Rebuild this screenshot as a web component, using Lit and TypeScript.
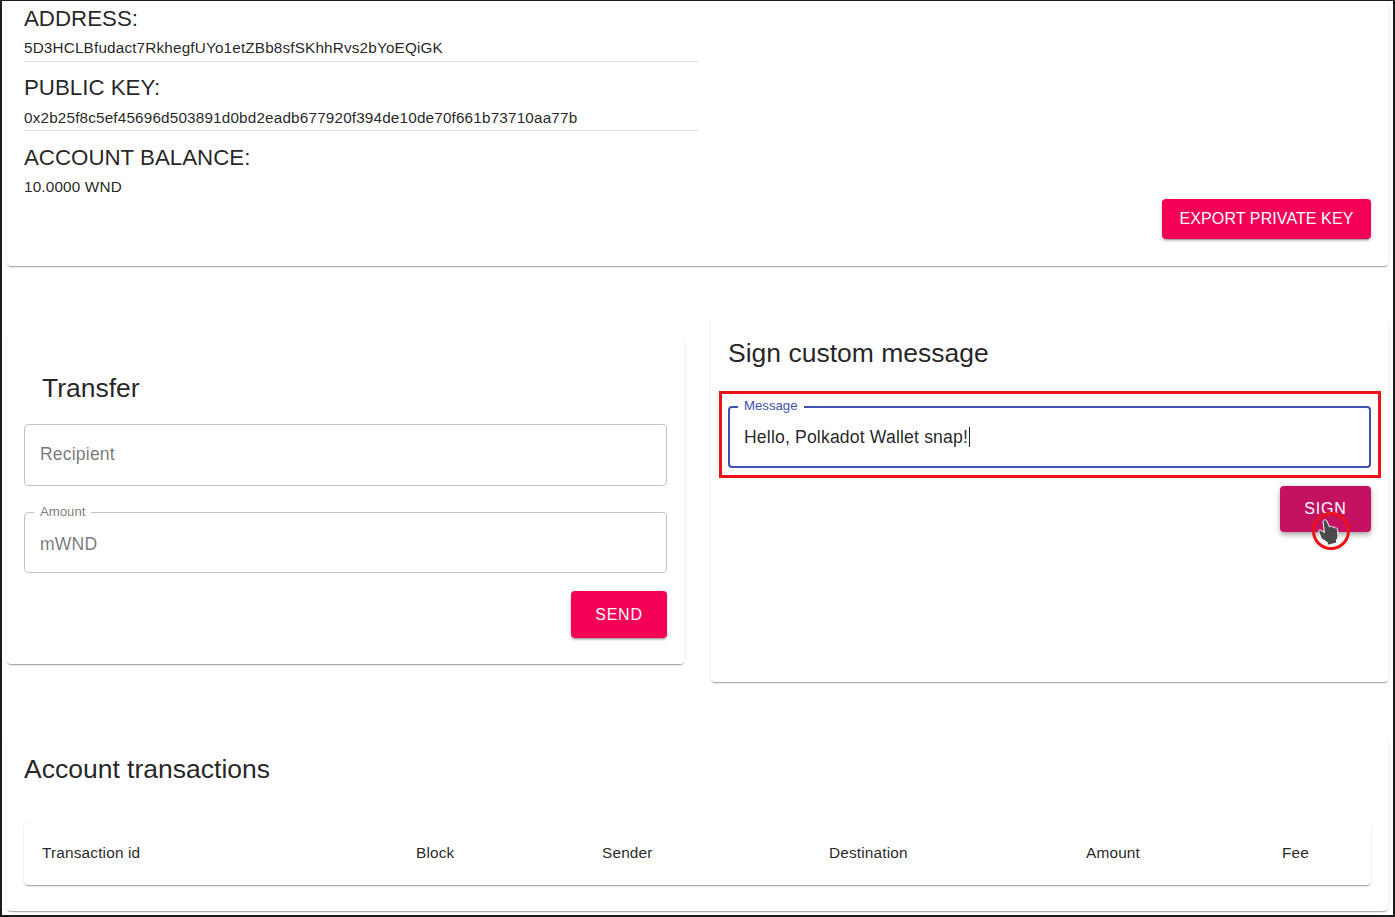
import { html, css, LitElement } from 'lit';
import { customElement } from 'lit/decorators.js';

const paperShadow = css`
  box-shadow: 0 2px 1px -1px rgba(0, 0, 0, 0.2), 0 1px 1px 0 rgba(0, 0, 0, 0.14),
    0 1px 3px 0 rgba(0, 0, 0, 0.1);
`;

@customElement('app-root')
export class AppRoot extends LitElement {
  render() {
    return html`
      <main class="frame">
        <section class="card account">
          <div class="details">
            <h2 class="label">ADDRESS:</h2>
            <p class="value ruled">5D3HCLBfudact7RkhegfUYo1etZBb8sfSKhhRvs2bYoEQiGK</p>
            <h2 class="label">PUBLIC KEY:</h2>
            <p class="value ruled key">0x2b25f8c5ef45696d503891d0bd2eadb677920f394de10de70f661b73710aa77b</p>
            <h2 class="label balance">ACCOUNT BALANCE:</h2>
            <p class="value">10.0000 WND</p>
          </div>
          <button class="btn export">Export private key</button>
        </section>

        <div class="columns">
          <section class="card transfer">
            <h3 class="title transfer-title">Transfer</h3>
            <div class="field recipient"><span class="placeholder">Recipient</span></div>
            <div class="field amount">
              <span class="legend">Amount</span>
              <span class="placeholder">mWND</span>
            </div>
            <div class="actions"><button class="btn send">Send</button></div>
          </section>

          <section class="card sign">
            <h3 class="title">Sign custom message</h3>
            <div class="field focused">
              <span class="legend">Message</span>
              <span class="typed">Hello, Polkadot Wallet snap!</span><span class="caret"></span>
              <div class="highlight"></div>
            </div>
            <div class="actions">
              <button class="btn hover sign-btn">
                Sign
                <span class="pointer">
                  <svg width="22" height="28" viewBox="0 0 22 28">
                    <path
                      d="M5 2.5c.3-2 3-2.4 3.9-.5l2.6 6 .9-.5c1-.4 1.9 0 2.3.8l.5-.2c1-.3 1.8.2 2.1 1l.5-.1c1-.1 1.6.5 1.8 1.4l.4 6.5c0 2-.8 3.2-1.6 4l.3 3-8.6 2.4-1-3-5.8-3.7L.8 13c-.6-1 .3-2.5 1.6-2l4 2.5z"
                      fill="#4b4b4b"
                      stroke="#fff"
                      stroke-width="1"
                    />
                  </svg>
                </span>
              </button>
            </div>
          </section>
        </div>

        <section class="card transactions">
          <h3 class="title">Account transactions</h3>
          <div class="table">
            <span>Transaction id</span>
            <span>Block</span>
            <span>Sender</span>
            <span>Destination</span>
            <span>Amount</span>
            <span>Fee</span>
          </div>
        </section>
      </main>
    `;
  }

  static styles = css`
    :host {
      display: block;
      font-family: 'Liberation Sans', Arial, sans-serif;
      color: rgba(0, 0, 0, 0.87);
    }

    * {
      box-sizing: border-box;
    }

    .frame {
      height: 917px;
      padding: 0 5px 5px 5px;
      border: 1px solid #1c1c1c;
      border-width: 1px 2px 2px 2px;
      background: #fff;
      overflow: hidden;
    }

    .card {
      background: #fff;
      border-radius: 4px;
      ${paperShadow}
    }

    .account {
      height: 265px;
      padding: 6px 17px 27px 17px;
      display: flex;
      justify-content: space-between;
      align-items: flex-end;
    }

    .details {
      width: 674px;
      align-self: flex-start;
    }

    .label {
      margin: 0;
      font-size: 22.3px;
      font-weight: 400;
      line-height: 24px;
    }

    .balance {
      margin-top: 15px;
    }

    .value {
      margin: 5px 0 14px;
      font-size: 15.3px;
      line-height: 24px;
      height: 25px;
      letter-spacing: 0.16px;
    }

    .ruled {
      border-bottom: 1px solid rgba(0, 0, 0, 0.12);
      height: 26px;
    }

    .key {
      margin-top: 6px;
      height: 25px;
    }

    .columns {
      display: grid;
      grid-template-columns: 677px 677px;
      justify-content: space-between;
      align-items: center;
      margin-top: 52px;
    }

    .transfer {
      height: 328px;
      padding: 35px 17px 0;
    }

    .sign {
      height: 364px;
      padding: 18px 17px 0;
    }

    .title {
      margin: 0;
      font-size: 26.5px;
      font-weight: 400;
      line-height: 34px;
    }

    .transfer-title {
      padding-left: 18px;
    }

    .field {
      position: relative;
      height: 62px;
      padding: 0 15px;
      border: 1px solid #c4c4c4;
      border-radius: 4px;
      display: flex;
      align-items: center;
      font-size: 17.6px;
      letter-spacing: 0.165px;
    }

    .recipient {
      margin-top: 19px;
      padding-bottom: 2px;
    }

    .amount {
      margin-top: 26px;
      height: 61px;
      padding-top: 3px;
    }

    .placeholder {
      color: rgba(0, 0, 0, 0.54);
    }

    .legend {
      position: absolute;
      top: -9px;
      left: 9px;
      padding: 0 6px;
      background: #fff;
      font-size: 13.2px;
      line-height: 15px;
      letter-spacing: 0;
      color: rgba(0, 0, 0, 0.54);
    }

    .focused {
      margin-top: 36px;
      border: 2px solid #3f51b5;
      padding: 0 14px;
    }

    .focused .legend {
      top: -10px;
      left: 8px;
      color: #3f51b5;
    }

    .caret {
      width: 1px;
      height: 20px;
      background: #222;
      margin-left: 1px;
    }

    .highlight {
      position: absolute;
      top: -17px;
      left: -11px;
      right: -12px;
      bottom: -12px;
      border: 3px solid #ef1118;
      pointer-events: none;
    }

    .actions {
      display: flex;
      justify-content: flex-end;
    }

    .btn {
      position: relative;
      border: 0;
      border-radius: 4px;
      background: #f50057;
      color: #fff;
      font: inherit;
      font-size: 16px;
      letter-spacing: 0.09px;
      text-transform: uppercase;
      box-shadow: 0 3px 1px -2px rgba(0, 0, 0, 0.2), 0 2px 2px 0 rgba(0, 0, 0, 0.14),
        0 1px 5px 0 rgba(0, 0, 0, 0.12);
    }

    .hover {
      background: #c51162;
      box-shadow: 0 2px 4px -1px rgba(0, 0, 0, 0.2), 0 4px 5px 0 rgba(0, 0, 0, 0.14),
        0 1px 10px 0 rgba(0, 0, 0, 0.12);
    }

    .export {
      width: 209px;
      height: 40px;
      padding: 0;
    }

    .send {
      width: 96px;
      height: 47px;
      margin-top: 18px;
      letter-spacing: 0.8px;
    }

    .sign-btn {
      width: 91px;
      height: 46px;
      margin-top: 18px;
      letter-spacing: 0.8px;
    }

    .pointer {
      position: absolute;
      left: 32px;
      top: 26px;
      width: 38px;
      height: 38px;
      border: 3px solid #ef1118;
      border-radius: 50%;
      display: flex;
      align-items: center;
      justify-content: center;
    }

    .pointer svg {
      flex: none;
      margin: 4px 4px 0 0;
    }

    .transactions {
      height: 176px;
      margin-top: 53px;
      padding: 17px 17px 0;
    }

    .table {
      display: grid;
      grid-template-columns: 374px 186px 227px 257px 196px 107px;
      align-items: center;
      height: 63px;
      margin-top: 36px;
      padding-bottom: 2px;
      border-radius: 4px;
      font-size: 15.4px;
      letter-spacing: 0.16px;
      ${paperShadow}
    }

    .table span {
      padding-left: 18px;
    }
  `;
}
